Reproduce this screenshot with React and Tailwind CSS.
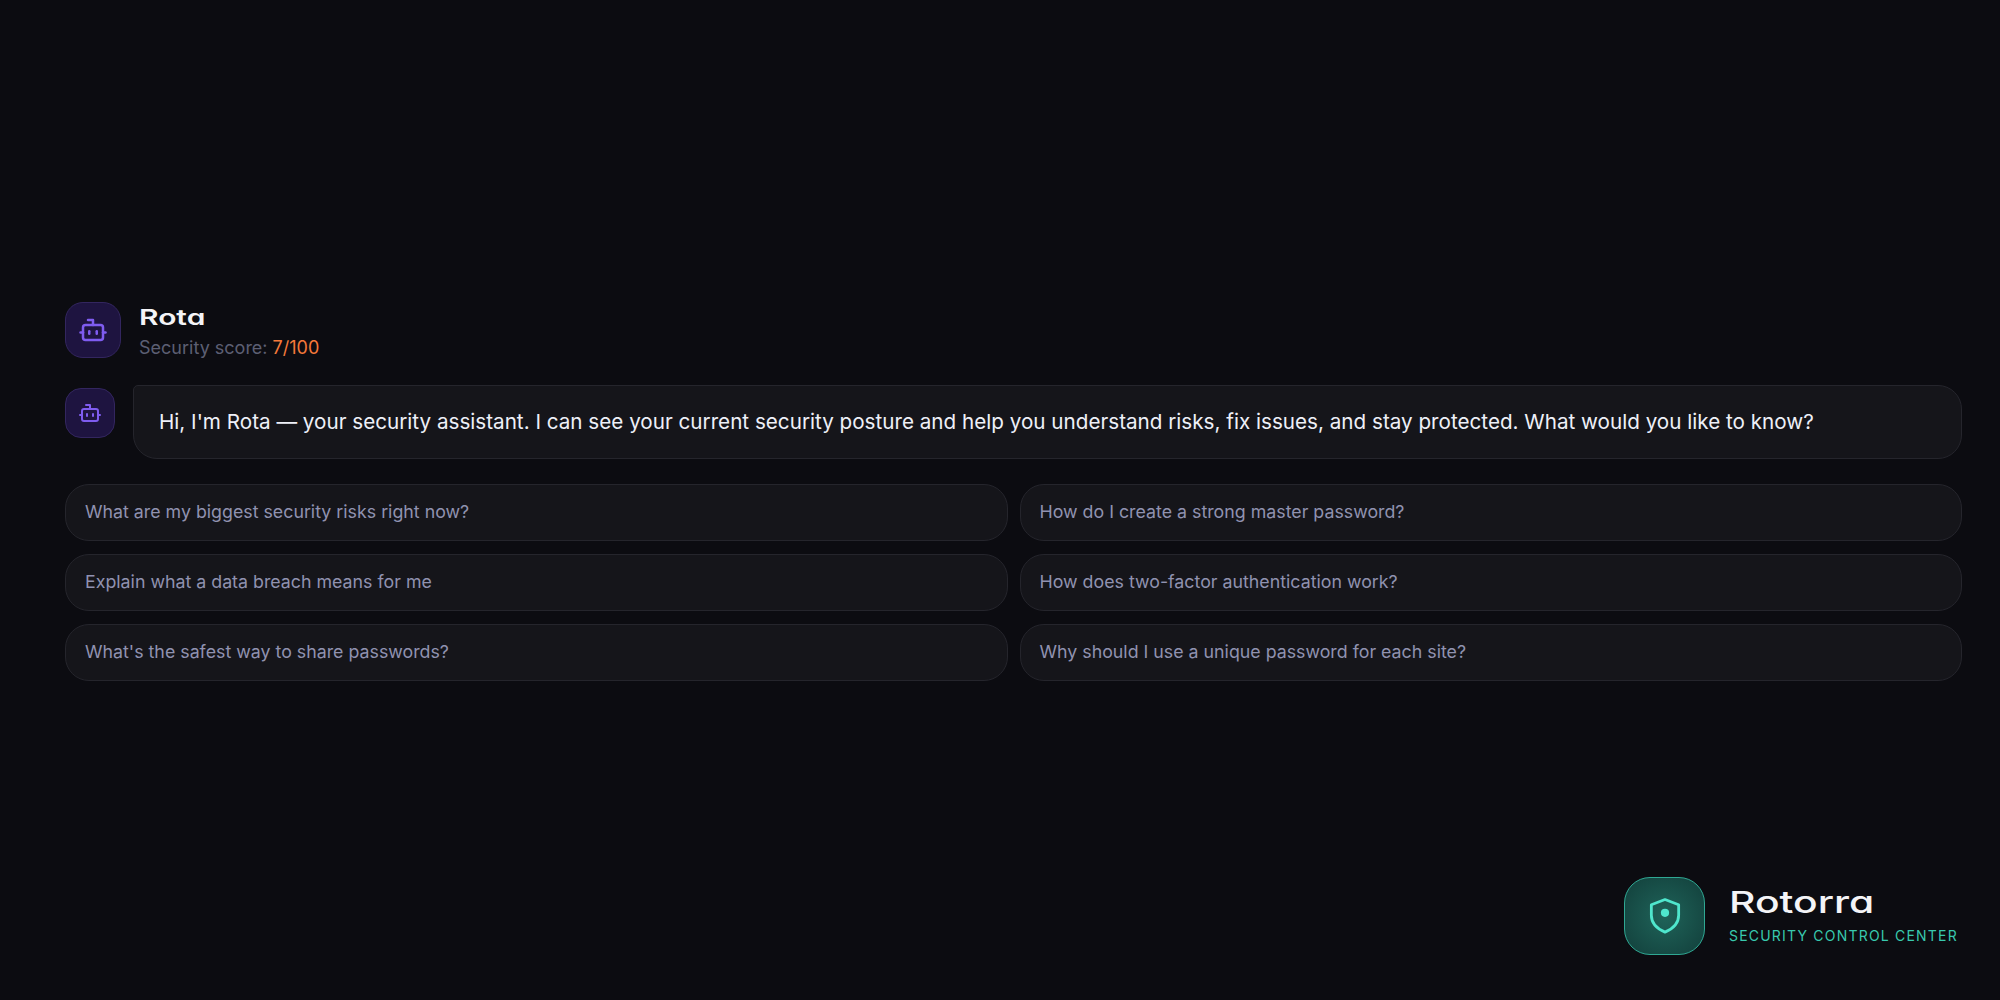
import React from 'react';
import { Bot } from 'lucide-react';

const prompts = [
  'What are my biggest security risks right now?',
  'How do I create a strong master password?',
  'Explain what a data breach means for me',
  'How does two-factor authentication work?',
  "What's the safest way to share passwords?",
  'Why should I use a unique password for each site?',
];

const ShieldDot = () => (
  <svg width="42" height="42" viewBox="0 0 24 24" fill="none" stroke="#4fe6cd" strokeWidth="1.6" strokeLinecap="round" strokeLinejoin="round">
    <path d="M12 2.6 L19.8 5.6 V11.6 C19.8 16.4 16.4 19.4 12 21.2 C7.6 19.4 4.2 16.4 4.2 11.6 V5.6 Z" />
    <circle cx="12" cy="10.2" r="2.35" fill="#4fe6cd" stroke="none" />
  </svg>
);

export default function App() {
  return (
    <div className="relative h-screen bg-[#0c0c11] font-['Inter',sans-serif] overflow-hidden">
      <div className="flex h-full flex-col justify-center pl-[65px] pr-[38px] pb-[23px]">
        <div className="flex items-center gap-[18px]">
          <div className="flex h-[56px] w-[56px] items-center justify-center rounded-[18px] border border-[#33265f] bg-[#1e1440]">
            <Bot size={30} strokeWidth={2} className="text-[#7f5cf0]" />
          </div>
          <div className="flex flex-col pt-[5px]">
            <span className="origin-left scale-x-[1.36] text-[22px] leading-[30px] font-semibold text-[#f4f4f7] [font-feature-settings:'cv11']">Rota</span>
            <span className="mt-[1px] text-[18px] leading-[30px] text-[#5c5f73]">
              Security score: <span className="text-[#f5793a]">7/100</span>
            </span>
          </div>
        </div>

        <div className="mt-[22px] flex items-start gap-[18px]">
          <div className="mt-[3px] flex h-[50px] w-[50px] shrink-0 items-center justify-center rounded-[16px] border border-[#33265f] bg-[#1e1440]">
            <Bot size={24} strokeWidth={2} className="text-[#7f5cf0]" />
          </div>
          <div className="flex h-[74px] grow items-center rounded-[24px] rounded-tl-[5px] border border-[#25252c] bg-[#15151a] px-[25px] text-[20.67px] text-[#eef0f8]">
            Hi, I'm Rota — your security assistant. I can see your current security posture and help you understand risks, fix issues, and stay protected. What would you like to know?
          </div>
        </div>

        <div className="mt-[25px] grid grid-cols-2 gap-x-[12px] gap-y-[13px]">
          {prompts.map((p) => (
            <div key={p} className="flex h-[57px] items-center rounded-[24px] border border-[#25252c] bg-[#15151a] px-[19px] pt-[1px] text-[17.8px] text-[#9092b0]">
              {p}
            </div>
          ))}
        </div>
      </div>

      <div className="absolute top-[877px] left-[1624px] flex items-center gap-[24px]">
        <div className="flex h-[78px] w-[81px] items-center justify-center rounded-[26px] border border-[#2fa893] bg-[radial-gradient(circle,#1f6359_0%,#123f3b_100%)]">
          <ShieldDot />
        </div>
        <div className="mb-[5px] flex flex-col">
          <span className="origin-left scale-x-[1.36] text-[30px] leading-[44px] font-medium text-[#f4f4f7] [font-feature-settings:'cv11']">Rotorra</span>
          <span className="text-[14px] leading-[24px] tracking-[1.2px] text-[#38c9ae]">SECURITY CONTROL CENTER</span>
        </div>
      </div>
    </div>
  );
}
